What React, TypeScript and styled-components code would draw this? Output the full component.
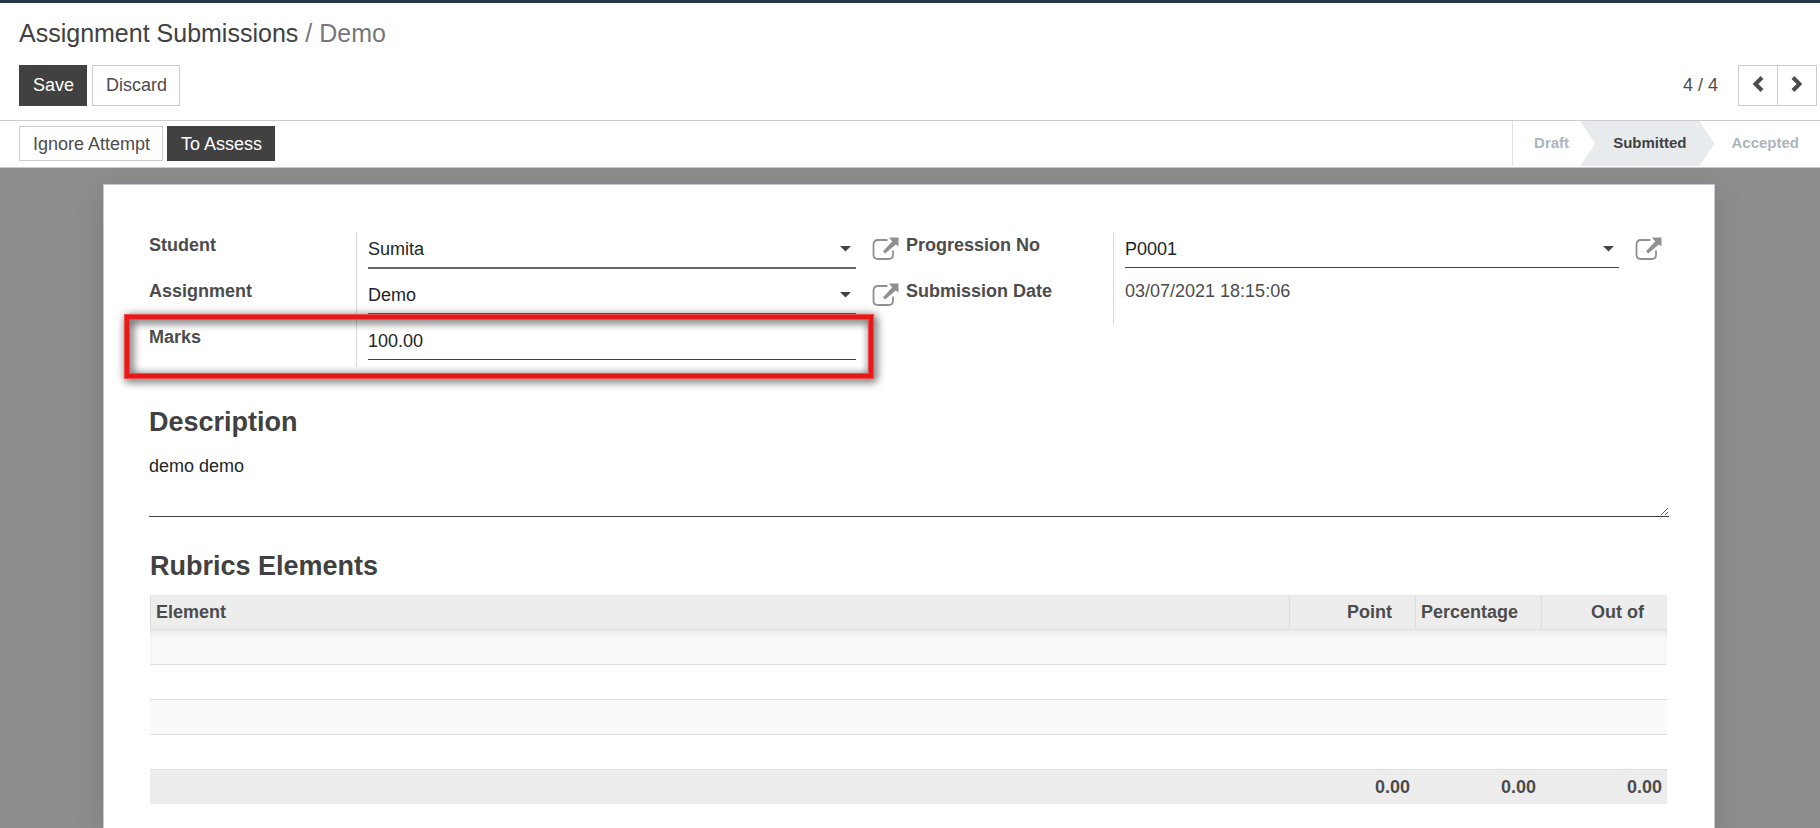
import React from "react";
import styled, { createGlobalStyle, css } from "styled-components";

const GlobalStyle = createGlobalStyle`
  *, *::before, *::after { box-sizing: border-box; }
  body {
    margin: 0;
    background: #8d8d8d;
    color: #4c4c4c;
    font: 18px/27px "Liberation Sans", Arial, sans-serif;
  }
  button, input, select, textarea { font: inherit; color: inherit; border-radius: 0; }
`;

const Page = styled.div`
  min-height: 100vh;
  display: flex;
  flex-direction: column;
`;

const ControlPanel = styled.header`
  border-top: 3px solid #243742;
  border-bottom: 1px solid #cccccc;
  background: #fff;
  padding: 12px 3px 14px 19px;
`;

const Breadcrumb = styled.nav`
  display: flex;
  gap: 7px;
  height: 50px;
  font-size: 25px;
  line-height: 36px;
  color: #777;
`;

const BreadcrumbLink = styled.a`
  color: #414141;
  text-decoration: none;
`;

const Bar = styled.div`
  display: flex;
  justify-content: space-between;
  align-items: center;
`;

const ButtonGroup = styled.div<{ $gap: number }>`
  display: flex;
  gap: ${(p) => p.$gap}px;
`;

const Button = styled.button<{ $primary?: boolean; $compact?: boolean }>`
  height: ${(p) => (p.$compact ? 35 : 41)}px;
  padding: ${(p) => (p.$compact ? 2 : 0)}px 12px 0 13px;
  border: 1px solid #cccccc;
  background: #fff;
  white-space: nowrap;
  cursor: pointer;
  ${(p) =>
    p.$primary &&
    css`
      border-color: #414141;
      background: #414141;
      color: #fff;
    `}
`;

const Pager = styled.div`
  display: flex;
  align-items: center;
  gap: 20px;
`;

const PagerButtons = styled.div`
  display: flex;
`;

const PagerButton = styled.button`
  display: flex;
  align-items: center;
  justify-content: center;
  width: 40px;
  height: 41px;
  padding: 0 0 4px;
  border: 1px solid #cccccc;
  background: #fff;
  cursor: pointer;
  & + & { margin-left: -1px; }
`;

const StatusBar = styled(Bar)`
  align-items: flex-start;
  height: 47px;
  padding-left: 19px;
  border-bottom: 1px solid #cccccc;
  background: #fff;
`;

const Actions = styled(ButtonGroup)`
  padding-top: 5px;
`;

const Steps = styled.div`
  display: flex;
  height: 45px;
  border-left: 1px solid #dee2e6;
`;

const Step = styled.button<{ $active?: boolean }>`
  height: 45px;
  padding: 0 21px 2px;
  border: 0;
  background: #fff;
  color: #adb5bd;
  font-size: 15px;
  font-weight: bold;
  ${(p) =>
    p.$active &&
    css`
      margin: 0 -4px 0 -10px;
      padding: 0 28px 2px 33px;
      background: #e7ebee;
      color: #414141;
      clip-path: polygon(0 0, calc(100% - 15px) 0, 100% 50%, calc(100% - 15px) 100%, 0 100%, 15px 50%);
    `}
`;

const Content = styled.main`
  flex: 1;
  display: flex;
  flex-direction: column;
  padding: 16px 105px 0 103px;
`;

const Sheet = styled.section`
  flex: 1;
  padding: 47px 45px 24px;
  border: 1px solid #c8c8d3;
  border-bottom: 0;
  background: #fff;
  box-shadow: 0 7px 27px 0 rgba(0, 0, 0, 0.12);
`;

const Groups = styled.div`
  position: relative;
  display: grid;
  grid-template-columns: 757fr 763fr;
  align-items: start;
`;

const Field = styled.div<{ $last?: boolean }>`
  display: grid;
  grid-template-columns: 207px minmax(0, 1fr);
  height: ${(p) => (p.$last ? 43 : 46)}px;
`;

const FieldLabel = styled.label`
  font-weight: bold;
`;

const FieldCell = styled.div`
  display: grid;
  grid-template-columns: minmax(0, 1fr) 50px;
  align-items: start;
  padding-left: 11px;
  border-left: 1px solid #d9d9d9;
`;

const SelectBox = styled.div`
  display: grid;
  align-items: center;
  > * { grid-area: 1 / 1; }
`;

const control = css`
  width: 100%;
  padding: 0;
  border: 0;
  outline: 0;
  background: transparent;
  color: #212529;
`;

const Select = styled.select<{ $heavy?: boolean }>`
  ${control}
  appearance: none;
  height: ${(p) => (p.$heavy ? 37 : 36)}px;
  border-bottom: ${(p) => (p.$heavy ? "2px solid #666" : "1px solid #414141")};
`;

const Caret = styled.svg`
  justify-self: end;
  margin: 0 5px 3px 0;
  pointer-events: none;
`;

const Input = styled.input`
  ${control}
  height: 36px;
  border-bottom: 1px solid #414141;
`;

const IconButton = styled.button`
  display: flex;
  margin: 5px 0 0 16px;
  padding: 0;
  border: 0;
  background: none;
  cursor: pointer;
`;

const Highlight = styled.div`
  position: absolute;
  top: 82px;
  left: -25px;
  width: 750px;
  height: 65px;
  border: 1px solid #e85050;
  filter: drop-shadow(2px 2px 5px rgba(0, 0, 0, 0.8));
  pointer-events: none;
  &::before {
    content: "";
    position: absolute;
    inset: 0;
    border: 4px solid #e91818;
  }
  &::after {
    content: "";
    position: absolute;
    inset: 4px;
    border: 1px solid #e85050;
  }
`;

const Heading = styled.h2`
  margin: 0;
  color: #414141;
  font-size: 27px;
  line-height: 36px;
`;

const Description = styled.section`
  margin-top: 37px;
`;

const TextArea = styled.textarea`
  ${control}
  display: block;
  height: 66px;
  margin-top: 11px;
  padding-top: 2px;
  border-bottom: 1px solid #414141;
  resize: vertical;
  overflow: auto;
`;

const Rubrics = styled.section`
  margin: 31px 2px 0 1px;
`;

const Table = styled.table`
  width: 100%;
  margin-top: 11px;
  border-spacing: 0;
  table-layout: fixed;
`;

const HeadCell = styled.th<{ $numeric?: boolean }>`
  width: ${(p) => (p.$numeric ? "126px" : "auto")};
  height: 35px;
  padding: ${(p) => (p.$numeric ? "0 23px 0 0" : "0 5px")};
  border-left: 1px solid #dddddd;
  border-bottom: 1px solid #dfdfdf;
  background: #ededed;
  text-align: ${(p) => (p.$numeric ? "right" : "left")};
`;

const EmptyCell = styled.td`
  height: 35px;
  padding: 0;
  border-bottom: 1px solid #dee0e4;
  tr:nth-child(odd) > & { background: #f9f9f9; }
  tr:first-child > & { box-shadow: inset 0 5px 10px -4px rgba(0, 0, 0, 0.1); }
`;

const TotalCell = styled.td`
  height: 34px;
  padding: 0 5px;
  background: #ededed;
  font-weight: bold;
  text-align: right;
`;

const Chevron = ({ right }: { right?: boolean }) => (
  <svg width="12" height="18" viewBox="0 0 12 18" fill="none" stroke="#4c4c4c" strokeWidth="4" aria-hidden="true">
    <path d={right ? "M2 2.5 8.5 9 2 15.5" : "M10 2.5 3.5 9 10 15.5"} />
  </svg>
);

const OpenRecord = ({ label }: { label: string }) => (
  <IconButton aria-label={label}>
    <svg width="27" height="24" viewBox="0 0 27 24" aria-hidden="true">
      <path
        d="M15.500 3H6Q1.500 3 1.500 7.500V18Q1.500 22 6 22H16.500Q21 22 21 18V13.500"
        fill="none"
        stroke="#909090"
        strokeWidth="1.800"
      />
      <path d="M17 .5H26.500V9.500L23.800 7.600 13.200 16.500 11 14.200 20.200 4.500Z" fill="#909090" />
    </svg>
  </IconButton>
);

type SelectFieldProps = { id: string; label: string; value: string; heavy?: boolean };

const SelectField = ({ id, label, value, heavy }: SelectFieldProps) => (
  <Field>
    <FieldLabel htmlFor={id}>{label}</FieldLabel>
    <FieldCell>
      <SelectBox>
        <Select id={id} $heavy={heavy} defaultValue={value}>
          <option>{value}</option>
        </Select>
        <Caret width="11" height="6" viewBox="0 0 11 6" aria-hidden="true">
          <path d="M0 0H11L5.500 5.500Z" fill="#444" />
        </Caret>
      </SelectBox>
      <OpenRecord label={`Open ${label}`} />
    </FieldCell>
  </Field>
);

const numericColumns = ["Point", "Percentage", "Out of"];

export default function App() {
  return (
    <Page>
      <GlobalStyle />
      <ControlPanel>
        <Breadcrumb aria-label="Breadcrumb">
          <BreadcrumbLink href="#submissions">Assignment Submissions</BreadcrumbLink>
          <span>/</span>
          <span>Demo</span>
        </Breadcrumb>
        <Bar>
          <ButtonGroup $gap={5}>
            <Button $primary>Save</Button>
            <Button>Discard</Button>
          </ButtonGroup>
          <Pager>
            <span>4 / 4</span>
            <PagerButtons>
              <PagerButton aria-label="Previous"><Chevron /></PagerButton>
              <PagerButton aria-label="Next"><Chevron right /></PagerButton>
            </PagerButtons>
          </Pager>
        </Bar>
      </ControlPanel>
      <StatusBar>
        <Actions $gap={4}>
          <Button $compact>Ignore Attempt</Button>
          <Button $compact $primary>To Assess</Button>
        </Actions>
        <Steps>
          <Step>Draft</Step>
          <Step $active aria-current="step">Submitted</Step>
          <Step>Accepted</Step>
        </Steps>
      </StatusBar>
      <Content>
        <Sheet>
          <Groups>
            <div>
              <SelectField id="student" label="Student" value="Sumita" heavy />
              <SelectField id="assignment" label="Assignment" value="Demo" heavy />
              <Field $last>
                <FieldLabel htmlFor="marks">Marks</FieldLabel>
                <FieldCell>
                  <Input id="marks" defaultValue="100.00" />
                </FieldCell>
              </Field>
            </div>
            <div>
              <SelectField id="progression" label="Progression No" value="P0001" />
              <Field>
                <FieldLabel htmlFor="submitted">Submission Date</FieldLabel>
                <FieldCell>
                  <output id="submitted">03/07/2021 18:15:06</output>
                </FieldCell>
              </Field>
            </div>
            <Highlight />
          </Groups>
          <Description>
            <Heading id="description">Description</Heading>
            <TextArea aria-labelledby="description" defaultValue="demo demo" />
          </Description>
          <Rubrics>
            <Heading>Rubrics Elements</Heading>
            <Table>
              <thead>
                <tr>
                  <HeadCell>Element</HeadCell>
                  {numericColumns.map((name) => (
                    <HeadCell key={name} $numeric>{name}</HeadCell>
                  ))}
                </tr>
              </thead>
              <tbody>
                {[0, 1, 2, 3].map((row) => (
                  <tr key={row}>
                    <EmptyCell colSpan={4} />
                  </tr>
                ))}
              </tbody>
              <tfoot>
                <tr>
                  <TotalCell />
                  {numericColumns.map((name) => (
                    <TotalCell key={name}>0.00</TotalCell>
                  ))}
                </tr>
              </tfoot>
            </Table>
          </Rubrics>
        </Sheet>
      </Content>
    </Page>
  );
}
